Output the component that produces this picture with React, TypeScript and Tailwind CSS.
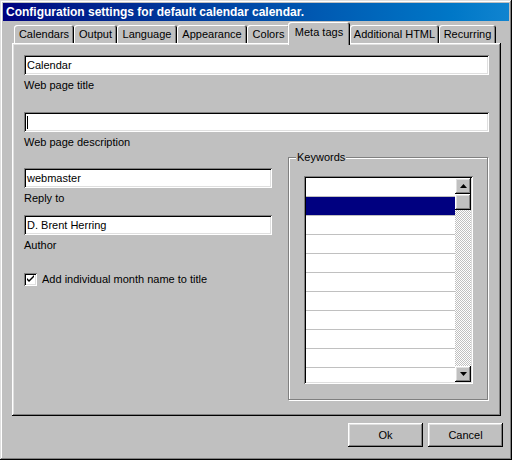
import React from 'react';

// Classic 3D borders as inset shadows
const raised = 'shadow-[inset_-1px_-1px_#000,inset_1px_1px_#fff,inset_-2px_-2px_#808080,inset_2px_2px_#dfdfdf]';
const sunken = 'shadow-[inset_1px_1px_#808080,inset_-1px_-1px_#fff,inset_2px_2px_#000,inset_-2px_-2px_#dfdfdf]';

const tabs = [
    { label: 'Calendars', w: 'w-[60px]' },
    { label: 'Output', w: 'w-[43px]' },
    { label: 'Language', w: 'w-[60px]' },
    { label: 'Appearance', w: 'w-[70px]' },
    { label: 'Colors', w: 'w-[43px]' },
    { label: 'Meta tags', w: 'w-[62px]', active: true },
    { label: 'Additional HTML', w: 'w-[89px]' },
    { label: 'Recurring', w: 'w-[57px]' },
];

const Arrow: React.FC<{ down?: boolean }> = ({ down }) => (
    <svg width="7" height="4" viewBox="0 0 7 4">
        {down ? <polygon points="0,0 7,0 3.5,4" fill="#000" /> : <polygon points="3.5,0 7,4 0,4" fill="#000" />}
    </svg>
);

const TextBox: React.FC<{ w: string; value?: string; caret?: boolean }> = ({ w, value, caret }) => (
    <div className={`${w} h-[20px] bg-white ${sunken} pl-[3px] flex items-center leading-[20px]`}>
        {caret ? <span className="block w-px h-[13px] bg-black" /> : value}
    </div>
);

const Label: React.FC<{ text: string }> = ({ text }) => (
    <div className="mt-[4px] h-[13px] leading-[13px]">{text}</div>
);

const App: React.FC = () => {
    const rows = Array.from({ length: 11 }, (_, i) => i);

    return (
        <div className="w-[512px] h-[460px] bg-[#c0c0c0] p-[3px] flex flex-col text-[11px] text-black font-['Liberation_Sans',Arial,sans-serif] shadow-[inset_-1px_-1px_#000,inset_1px_1px_#dfdfdf,inset_-2px_-2px_#808080,inset_2px_2px_#fff]">
            {/* Title bar */}
            <div className="h-[18px] shrink-0 bg-linear-to-r from-[#000080] to-[#1084d0] pl-[3px] text-white text-[12px] font-bold leading-[18px]">
                Configuration settings for default calendar calendar.
            </div>

            {/* Tabs */}
            <div className="h-[22px] shrink-0 flex items-end pl-[11px]">
                {tabs.map((t) =>
                    t.active ? (
                        <div
                            key={t.label}
                            className={`${t.w} h-[23px] -mb-[2px] -ml-[2px] relative z-10 bg-[#c0c0c0] rounded-t-[3px] flex justify-center pt-[4px] leading-[13px] shadow-[inset_1px_1px_#fff,inset_-1px_0_#000,inset_-2px_0_#808080]`}
                        >
                            {t.label}
                        </div>
                    ) : (
                        <div
                            key={t.label}
                            className={`${t.w} h-[18px] rounded-t-[3px] flex justify-center pt-[3px] leading-[13px] shadow-[inset_1px_1px_#fff,inset_-1px_0_#000,inset_-2px_0_#808080]`}
                        >
                            {t.label}
                        </div>
                    )
                )}
            </div>

            {/* Tab panel */}
            <div className="ml-[9px] w-[489px] h-[373px] shrink-0 pt-[12px] pl-[12px] shadow-[inset_-1px_-1px_#000,inset_1px_1px_#fff,inset_-2px_-2px_#808080,inset_2px_2px_#dfdfdf]">
                <TextBox w="w-[465px]" value="Calendar" />
                <Label text="Web page title" />
                <div className="mt-[20px]">
                    <TextBox w="w-[465px]" caret />
                </div>
                <Label text="Web page description" />

                <div className="flex mt-[8px]">
                    {/* Left column */}
                    <div className="w-[264px] pt-[11px]">
                        <TextBox w="w-[248px]" value="webmaster" />
                        <Label text="Reply to" />
                        <div className="mt-[10px]">
                            <TextBox w="w-[248px]" value="D. Brent Herring" />
                        </div>
                        <Label text="Author" />
                        <div className="mt-[21px] flex items-center">
                            <div className={`w-[13px] h-[13px] bg-white ${sunken}`}>
                                <svg width="13" height="13" viewBox="0 0 13 13">
                                    <path d="M3 5v2l2 2 5-5V2L5 7z" fill="#000" />
                                </svg>
                            </div>
                            <span className="ml-[5px] leading-[13px]">Add individual month name to title</span>
                        </div>
                    </div>

                    {/* Keywords group */}
                    <div className="relative w-[200px] h-[243px] border border-[#808080] shadow-[1px_1px_0_#fff,inset_1px_1px_0_#fff]">
                        <span className="absolute left-[7px] -top-[7px] px-[1px] bg-[#c0c0c0] leading-[13px]">Keywords</span>
                        <div className={`ml-[15px] mt-[18px] w-[169px] h-[208px] bg-white ${sunken} p-[2px] flex`}>
                            <div className="flex-1 overflow-hidden">
                                {rows.map((i) => (
                                    <div
                                        key={i}
                                        className={`h-[19px] border-b border-[#c0c0c0] ${i === 1 ? 'bg-[#000080]' : 'bg-white'}`}
                                    />
                                ))}
                            </div>
                            <div className="w-[16px] flex flex-col">
                                <div className={`h-[16px] bg-[#c0c0c0] ${raised} flex items-center justify-center`}>
                                    <Arrow />
                                </div>
                                <div className={`h-[16px] bg-[#c0c0c0] ${raised}`} />
                                <div className="flex-1 bg-[repeating-conic-gradient(#c0c0c0_0%_25%,#ffffff_0%_50%)] bg-[length:2px_2px]" />
                                <div className={`h-[16px] bg-[#c0c0c0] ${raised} flex items-center justify-center`}>
                                    <Arrow down />
                                </div>
                            </div>
                        </div>
                    </div>
                </div>
            </div>

            {/* Buttons */}
            <div className="mt-[7px] flex justify-end gap-[5px] pr-[6px]">
                <button className={`w-[75px] h-[24px] bg-[#c0c0c0] ${raised} text-[11px]`}>Ok</button>
                <button className={`w-[75px] h-[24px] bg-[#c0c0c0] ${raised} text-[11px]`}>Cancel</button>
            </div>
        </div>
    );
};

export default App;
